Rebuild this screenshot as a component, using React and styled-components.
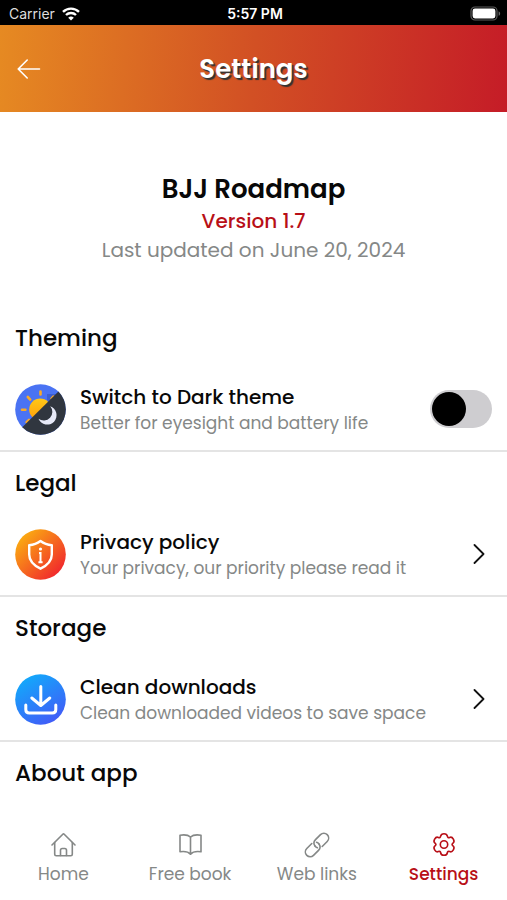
import { useState } from "react";
import styled, { createGlobalStyle } from "styled-components";

const sections = [
	{
		title: "Theming",
		name: "Switch to Dark theme",
		description: "Better for eyesight and battery life",
		Icon: ThemeIcon,
		toggle: true,
	},
	{
		title: "Legal",
		name: "Privacy policy",
		description: "Your privacy, our priority please read it",
		Icon: PrivacyIcon,
		href: "#privacy",
	},
	{
		title: "Storage",
		name: "Clean downloads",
		description: "Clean downloaded videos to save space",
		Icon: DownloadIcon,
	},
];

const tabs = [
	{ label: "Home", href: "#home", Icon: HomeIcon },
	{ label: "Free book", href: "#book", Icon: BookIcon },
	{ label: "Web links", href: "#links", Icon: LinksIcon },
	{ label: "Settings", href: "#settings", Icon: GearIcon, active: true },
];

export default function App() {
	return (
		<>
			<GlobalStyle />
			<SettingsScreen>
				<StatusBar>
					<Carrier>
						Carrier
						<WifiIcon />
					</Carrier>
					<Clock>5:57 PM</Clock>
					<Battery>
						<BatteryIcon />
					</Battery>
				</StatusBar>
				<Header>
					<BackButton type="button" aria-label="Back">
						<BackIcon />
					</BackButton>
					<h1>Settings</h1>
				</Header>
				<Content>
					<AppInfo>
						<AppName>BJJ Roadmap</AppName>
						<Version>Version 1.7</Version>
						<Updated>Last updated on June 20, 2024</Updated>
					</AppInfo>
					{sections.map((section) => (
						<Section key={section.title}>
							<SectionTitle>{section.title}</SectionTitle>
							<SettingItem {...section} />
						</Section>
					))}
					<Section $last>
						<SectionTitle>About app</SectionTitle>
					</Section>
				</Content>
				<TabBar>
					{tabs.map(({ label, href, Icon, active }) => (
						<Tab key={label} href={href} $active={active} aria-current={active ? "page" : undefined}>
							<Icon />
							{label}
						</Tab>
					))}
				</TabBar>
			</SettingsScreen>
		</>
	);
}

function SettingItem({ name, description, Icon, toggle, href }) {
	const [checked, setChecked] = useState(false);

	const content = (
		<>
			<Icon />
			<ItemText>
				<ItemName>{name}</ItemName>
				<ItemDescription>{description}</ItemDescription>
			</ItemText>
		</>
	);

	if (toggle) {
		return (
			<Item as="label">
				{content}
				<Switch type="checkbox" role="switch" checked={checked} onChange={(e) => setChecked(e.target.checked)} />
			</Item>
		);
	}

	return (
		<Item as={href ? "a" : "button"} href={href} type={href ? undefined : "button"}>
			{content}
			<ChevronIcon />
		</Item>
	);
}

function WifiIcon() {
	return (
		<svg width="18" height="14" viewBox="0 0 18 14" fill="none" stroke="#fff" strokeWidth="2.4" aria-hidden="true">
			<path d="M1 4.9a11.4 11.4 0 0 1 16 0" />
			<path d="M4 8a7.2 7.2 0 0 1 10 0" />
			<path d="M9 13.6 6.2 10.8a4 4 0 0 1 5.6 0Z" fill="#fff" stroke="none" />
		</svg>
	);
}

function BatteryIcon() {
	return (
		<svg width="31" height="15" viewBox="0 0 31 15" aria-hidden="true">
			<rect x="1" y="1" width="26" height="13" rx="4" fill="none" stroke="#5c5c5c" strokeWidth="1.2" />
			<rect x="2.6" y="2.6" width="22.8" height="9.8" rx="2.4" fill="#fff" />
			<path d="M28.6 5.2c2 .8 2 3.8 0 4.6Z" fill="#6a6a6a" />
		</svg>
	);
}

function BackIcon() {
	return (
		<svg width="24" height="20" viewBox="0 0 24 20" fill="none" stroke="#fff" strokeWidth="1.6" strokeLinecap="round" strokeLinejoin="round" aria-hidden="true">
			<path d="M22.5 10H1.2M10.2 1 1.2 10l9 9" />
		</svg>
	);
}

function ChevronIcon() {
	return (
		<svg width="12" height="20" viewBox="0 0 12 20" fill="none" stroke="#111" strokeWidth="1.8" strokeLinecap="round" strokeLinejoin="round" aria-hidden="true">
			<path d="m1.5 1 9 9-9 9" />
		</svg>
	);
}

function ThemeIcon() {
	return (
		<svg width="51" height="51" viewBox="0 0 51 51" aria-hidden="true">
			<defs>
				<linearGradient id="sun" x1="0" y1="0" x2="0" y2="1">
					<stop offset="0" stopColor="#ffc817" />
					<stop offset="1" stopColor="#ff9d0a" />
				</linearGradient>
				<clipPath id="disc">
					<circle cx="25.5" cy="25.5" r="25.3" />
				</clipPath>
			</defs>
			<g clipPath="url(#disc)">
				<path d="M0 0h51v51H0Z" fill="#4a73f3" />
				<path d="M32 10 42 10 32 20Z" fill="#3c5fd0" />
				<g stroke="#f9a928" strokeWidth="2.6" strokeLinecap="round">
					<path d="M25.5 7.5v3M12.8 13l2.4 2.6M7 25.8h3.4M11.6 38.2l2.4-2.4M36.6 14.6l1.8-2" />
				</g>
				<circle cx="25.2" cy="25.5" r="11" fill="url(#sun)" />
				<path d="M46 5 7 43.5V51h44V5Z" fill="#30363f" />
				<path d="M35.200 22.300A9.400 9.400 0 1 1 23.500 34.800 8.600 8.600 0 0 0 35.200 22.300Z" fill="#e6e9f8" />
			</g>
		</svg>
	);
}

function PrivacyIcon() {
	return (
		<svg width="51" height="51" viewBox="0 0 51 51" aria-hidden="true">
			<defs>
				<linearGradient id="privacy" x1="0.1" y1="0.1" x2="0.9" y2="0.9">
					<stop offset="0" stopColor="#fbb010" />
					<stop offset="1" stopColor="#f0232e" />
				</linearGradient>
			</defs>
			<circle cx="25.5" cy="25.5" r="25.3" fill="url(#privacy)" />
			<path d="M25.5 12c3.5 2.7 7 3.9 11.3 4.2v9.3c0 6.5-4.8 11-11.3 14.2-6.500-3.200-11.300-7.700-11.300-14.200v-9.300c4.300-.3 7.800-1.500 11.300-4.200Z" fill="none" stroke="#fff" strokeWidth="2.4" strokeLinejoin="round" />
			<circle cx="25.5" cy="20" r="1.6" fill="#fff" />
			<path d="M24 24h1.5v9M23.4 33.2h4.2" fill="none" stroke="#fff" strokeWidth="2" />
		</svg>
	);
}

function DownloadIcon() {
	return (
		<svg width="51" height="51" viewBox="0 0 51 51" fill="none" aria-hidden="true">
			<defs>
				<linearGradient id="download" x1="0.2" y1="0" x2="0.8" y2="1">
					<stop offset="0" stopColor="#10adfb" />
					<stop offset="1" stopColor="#4457f7" />
				</linearGradient>
			</defs>
			<circle cx="25.5" cy="25.5" r="25.3" fill="url(#download)" />
			<g stroke="#fff" strokeWidth="3" strokeLinecap="round" strokeLinejoin="round">
				<path d="M25.8 12.500v18.800M16.800 24l9 7.500 9-7.500" />
				<path d="M10.8 31v4.500q0 3.500 3.500 3.500h23q3.500 0 3.500-3.500V31" />
			</g>
		</svg>
	);
}

function TabIcon({ children }) {
	return (
		<svg width="26" height="26" viewBox="0 0 26 26" fill="none" stroke="currentColor" strokeWidth="1.6" strokeLinecap="round" strokeLinejoin="round" aria-hidden="true">
			{children}
		</svg>
	);
}

function HomeIcon() {
	return (
		<TabIcon>
			<path d="M2 13 12.800 2.200q.7-.7 1.400 0L25 13" />
			<path d="M4.700 10.500v11.700q0 1.500 1.500 1.500h14.600q1.500 0 1.500-1.500V10.500" />
			<path d="M10.500 23.500v-5.300q0-1.700 1.700-1.700h2.600q1.700 0 1.700 1.700v5.300" />
		</TabIcon>
	);
}

function BookIcon() {
	return (
		<TabIcon>
			<path d="M13.500 5C11 2.700 7 2.500 3 3.200v16.600c4-.6 8-.3 10.500 2.300 2.500-2.600 6.500-2.900 10.500-2.300V3.200C20 2.500 16 2.700 13.500 5Z" />
			<path d="M13.500 5v17" />
		</TabIcon>
	);
}

function LinksIcon() {
	return (
		<TabIcon>
			<path d="M11 14a5 5 0 0 1 .5-6.400l5-5a4.700 4.700 0 0 1 6.700 0 4.900 4.900 0 0 1 0 6.900l-5 5" />
			<path d="M15 12a5 5 0 0 1-.5 6.400l-5 5a4.700 4.700 0 0 1-6.700 0 4.900 4.900 0 0 1 0-6.900l5-5" />
			<path d="M11 14a5 5 0 0 0 2.400 1.800M15 12a5 5 0 0 0-2.400-1.800" />
		</TabIcon>
	);
}

function GearIcon() {
	return (
		<TabIcon>
			<g transform="translate(13 12.500)">
				<path d="M0-10.800Q2.900-10.800 3.300-8.500 3.600-6.200 5.700-7.100 7.850-8 9.350-5.400 10.850-2.800 9-1.400 7.100 0 9 1.400 10.850 2.800 9.350 5.400 7.850 8 5.700 7.100 3.600 6.200 3.300 8.500 2.900 10.800 0 10.800-2.900 10.800-3.300 8.500-3.600 6.200-5.700 7.100-7.850 8-9.350 5.400-10.850 2.800-9 1.400-7.100 0-9-1.400-10.850-2.800-9.350-5.400-7.850-8-5.700-7.100-3.600-6.200-3.300-8.500-2.900-10.800 0-10.800Z" />
				<circle r="3.7" />
			</g>
		</TabIcon>
	);
}

const GlobalStyle = createGlobalStyle`
	* {
		box-sizing: border-box;
	}
	body {
		margin: 0;
		background-color: #ffffff;
		font-family: Poppins, Inter, "Liberation Sans", sans-serif;
		color: #080808;
	}
	h1, h2, p {
		margin: 0;
	}
`;

const SettingsScreen = styled.div`
	min-height: 100vh;
	display: flex;
	flex-direction: column;
`;

const StatusBar = styled.div`
	height: 25px;
	display: grid;
	grid-template-columns: 1fr auto 1fr;
	align-items: center;
	padding: 2px 6px 0 9px;
	background-color: #000000;
	color: #ffffff;
	font-family: Inter, "Liberation Sans", sans-serif;
	font-size: 14px;
	line-height: 20px;
`;

const Carrier = styled.div`
	display: flex;
	align-items: center;
	gap: 7px;
	color: #dddddd;
`;

const Clock = styled.div`
	font-weight: 600;
`;

const Battery = styled.div`
	display: flex;
	justify-content: flex-end;
`;

const Header = styled.header`
	height: 87px;
	display: grid;
	grid-template-columns: 48px 1fr 48px;
	align-items: center;
	padding: 0 5px;
	background-image: linear-gradient(95deg, #e68a22, #d25024 50%, #c51c27);
	h1 {
		font-weight: 600;
		font-size: 26px;
		line-height: 36px;
		text-align: center;
		color: #ffffff;
		text-shadow: 2px 2px 1px #333333;
	}
`;

const BackButton = styled.button`
	height: 48px;
	display: flex;
	align-items: center;
	justify-content: center;
	padding: 0;
	border: none;
	background: none;
	cursor: pointer;
`;

const Content = styled.main`
	flex: 1;
`;

const AppInfo = styled.div`
	padding: 59px 16px 43px;
	text-align: center;
`;

const AppName = styled.h2`
	font-weight: 600;
	font-size: 26px;
	line-height: 36px;
`;

const Version = styled.p`
	font-weight: 500;
	font-size: 20px;
	line-height: 29px;
	color: #b80f17;
`;

const Updated = styled.p`
	font-size: 20px;
	line-height: 28px;
	color: #858887;
`;

const Section = styled.section`
	padding: 15px 0 14px;
	border-bottom: ${({ $last }) => ($last ? "none" : "2px solid #e4e4e4")};
`;

const SectionTitle = styled.h2`
	padding: 0 15px;
	font-weight: 500;
	font-size: 23px;
	line-height: 32px;
`;

const Item = styled.div`
	width: 100%;
	display: flex;
	align-items: center;
	gap: 14px;
	margin-top: 28px;
	padding: 0 15px;
	border: none;
	background: none;
	color: inherit;
	font-family: inherit;
	text-align: left;
	text-decoration: none;
	cursor: pointer;
	svg {
		flex-shrink: 0;
	}
	svg:last-child {
		margin-right: 7px;
	}
`;

const ItemText = styled.span`
	flex: 1;
	min-width: 0;
	display: flex;
	flex-direction: column;
	padding-top: 2px;
`;

const ItemName = styled.span`
	font-weight: 500;
	font-size: 20px;
	line-height: 26px;
`;

const ItemDescription = styled.span`
	font-size: 17px;
	line-height: 26px;
	color: #858887;
`;

const Switch = styled.input`
	appearance: none;
	width: 62px;
	height: 38px;
	flex-shrink: 0;
	margin: 0;
	padding: 2px;
	border-radius: 19px;
	background-color: #cecdd0;
	cursor: pointer;
	&::before {
		content: "";
		display: block;
		width: 34px;
		height: 34px;
		border-radius: 50%;
		background-color: #000000;
	}
	&:checked::before {
		margin-left: auto;
	}
`;

const TabBar = styled.nav`
	display: grid;
	grid-template-columns: repeat(4, 1fr);
	padding: 16px 0 13px;
	background-color: #ffffff;
`;

const Tab = styled.a`
	display: flex;
	flex-direction: column;
	align-items: center;
	gap: 3px;
	font-weight: ${({ $active }) => ($active ? 500 : 400)};
	font-size: 17px;
	line-height: 26px;
	text-decoration: none;
	color: ${({ $active }) => ($active ? "#b80f17" : "#858887")};
`;
